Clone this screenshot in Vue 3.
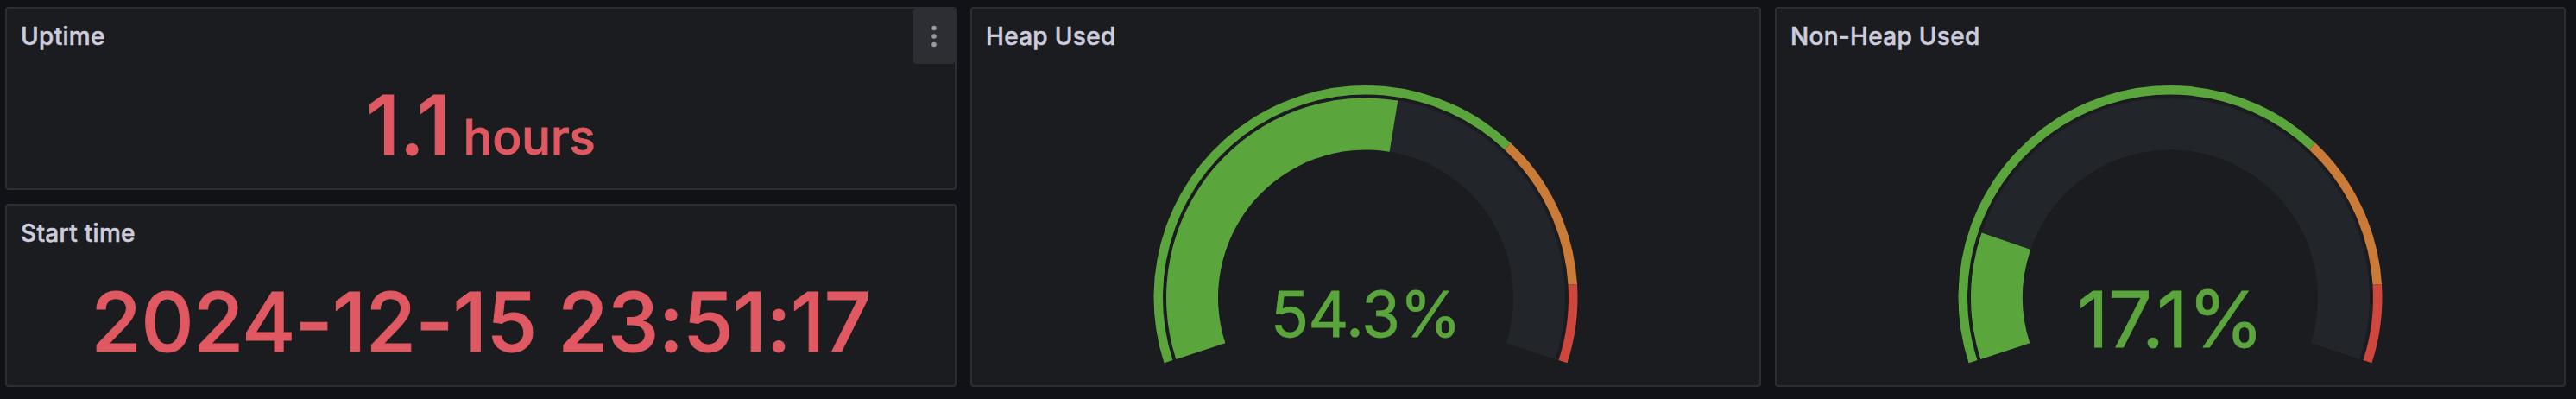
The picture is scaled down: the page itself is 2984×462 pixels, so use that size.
<template>
    <div class="dashboard">
        <div class="stat-column">
            <section v-for="stat in stats" :key="stat.title" class="panel">
                <header class="panel-header">
                    <h2 class="panel-title">{{ stat.title }}</h2>
                    <button
                        v-if="stat.hovered"
                        class="menu-button"
                        aria-label="Menu"
                    >
                        <svg width="48" height="64" viewBox="0 0 48 64">
                            <circle cx="24" cy="22.5" r="2.8" />
                            <circle cx="24" cy="32" r="2.8" />
                            <circle cx="24" cy="41.5" r="2.8" />
                        </svg>
                    </button>
                </header>
                <div class="stat-body">
                    <span class="stat-value">{{ stat.value }}</span>
                    <span v-if="stat.unit" class="stat-unit">{{
                        stat.unit
                    }}</span>
                </div>
            </section>
        </div>

        <section v-for="gauge in gauges" :key="gauge.title" class="panel">
            <header class="panel-header">
                <h2 class="panel-title">{{ gauge.title }}</h2>
            </header>
            <svg class="gauge" width="912" height="372" viewBox="0 0 912 372">
                <path class="track" :d="arc(0, 100, 171, 231)" />
                <path class="green" :d="arc(0, gauge.value, 171, 231)" />
                <path
                    v-for="t in thresholds"
                    :key="t.color"
                    :class="t.color"
                    :d="arc(t.from, t.to, 235, 245.5)"
                />
                <text
                    class="gauge-value"
                    x="456"
                    :y="gauge.baseline"
                    :font-size="gauge.fontSize"
                    text-anchor="middle"
                >
                    {{ gauge.value }}%
                </text>
            </svg>
        </section>
    </div>
</template>

<script setup>
const stats = [
    { title: "Uptime", value: "1.1", unit: "hours", hovered: true },
    { title: "Start time", value: "2024-12-15 23:51:17" },
];

const gauges = [
    { title: "Heap Used", value: 54.3, fontSize: 72.5, baseline: 316 },
    { title: "Non-Heap Used", value: 17.1, fontSize: 90, baseline: 328 },
];

const thresholds = [
    { color: "green", from: 0, to: 70 },
    { color: "orange", from: 70, to: 90 },
    { color: "red", from: 90, to: 100 },
];

const CX = 456;
const CY = 270.5;

// the scale sweeps 216 degrees, centred on the top
function point(percent, radius) {
    const angle = ((percent * 2.16 - 108) * Math.PI) / 180;
    const x = CX + radius * Math.sin(angle);
    const y = CY - radius * Math.cos(angle);
    return `${x.toFixed(2)} ${y.toFixed(2)}`;
}

function arc(from, to, inner, outer) {
    const large = (to - from) * 2.16 > 180 ? 1 : 0;
    return [
        `M ${point(from, outer)}`,
        `A ${outer} ${outer} 0 ${large} 1 ${point(to, outer)}`,
        `L ${point(to, inner)}`,
        `A ${inner} ${inner} 0 ${large} 0 ${point(from, inner)}`,
        "Z",
    ].join(" ");
}
</script>

<style>
body {
    margin: 0;
    background: #111217;
}
</style>

<style scoped>
.dashboard {
    box-sizing: border-box;
    width: 2984px;
    height: 462px;
    padding: 8px 12px 14px 6px;
    display: grid;
    grid-template-columns: 1102px 916px 916px;
    gap: 16px;
    background: #111217;
    font-family: Inter, "Liberation Sans", sans-serif;
}

.stat-column {
    display: grid;
    grid-template-rows: 212px 212px;
    gap: 16px;
}

.panel {
    box-sizing: border-box;
    display: flex;
    flex-direction: column;
    min-width: 0;
    background: #1b1c1f;
    border: 2px solid #2d2e32;
    border-radius: 4px;
}

.panel-header {
    flex: none;
    display: flex;
    justify-content: space-between;
    height: 64px;
    padding-left: 16px;
}

.panel-title {
    margin: 0;
    font-size: 28px;
    font-weight: 500;
    line-height: 64px;
    letter-spacing: 0.3px;
    color: #ccccdc;
    -webkit-text-stroke: 0.5px #ccccdc;
}

.menu-button {
    width: 48px;
    height: 64px;
    padding: 0;
    border: none;
    border-radius: 4px;
    background: #2d2e33;
}

.menu-button svg {
    display: block;
    fill: #9899a5;
}

.stat-body {
    flex: 1;
    display: flex;
    align-items: baseline;
    justify-content: center;
    color: #e05861;
    font-weight: 500;
    line-height: 142px;
    white-space: nowrap;
    -webkit-text-stroke: 1px #e05861;
}

.stat-value {
    font-size: 94.5px;
    letter-spacing: -0.45px;
}

.stat-unit {
    margin-left: 15px;
    font-size: 56px;
}

.gauge {
    display: block;
}

.gauge-value {
    fill: #5aa63c;
    stroke: #5aa63c;
    stroke-width: 0.8px;
    letter-spacing: -0.7px;
}

.track {
    fill: #222529;
}

.green {
    fill: #5aa63c;
}

.orange {
    fill: #c97b37;
}

.red {
    fill: #cf473c;
}
</style>
